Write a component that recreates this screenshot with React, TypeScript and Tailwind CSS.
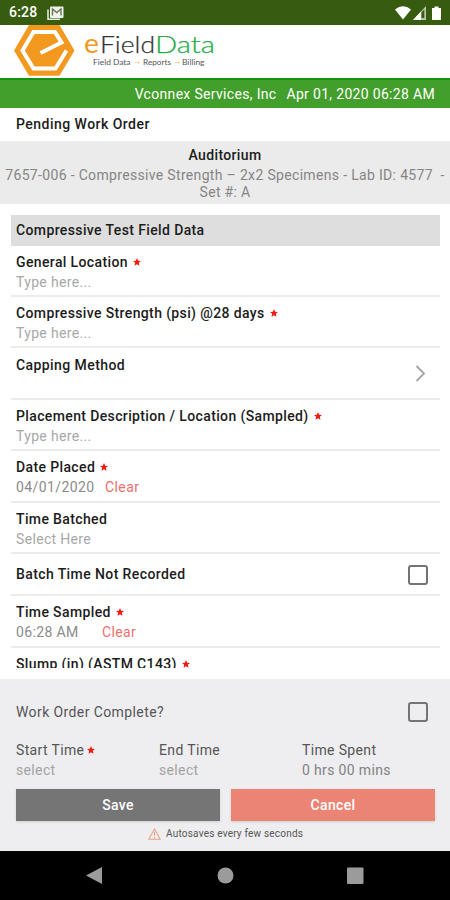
import type { ReactNode } from "react";

const Star = ({ className = "ml-[5px]" }: { className?: string }) => (
  <svg className={`inline-block size-[8px] align-[1.5px] ${className}`} viewBox="0 0 24 24" fill="#f5190f">
    <path d="M12 0l3.4 8 8.6.8-6.500 5.700 2 8.500L12 18.500 4.500 23l2-8.500L0 8.800 8.600 8z" />
  </svg>
);

function Field({
  label,
  required,
  height = "h-[51px]",
  children,
}: {
  label: string;
  required?: boolean;
  height?: string;
  children?: ReactNode;
}) {
  return (
    <div className={`${height} shrink-0 border-b-2 border-[#ebebeb] pl-[5px] pt-[6px] text-[14px] leading-[20px]`}>
      <div className="whitespace-nowrap font-medium tracking-[0.37px] text-[#1c1c1c]">
        {label}
        {required && <Star />}
      </div>
      {children}
    </div>
  );
}

const Hint = ({ children }: { children: ReactNode }) => (
  <div className="tracking-[0.33px] text-[#a8a8a8]">{children}</div>
);

const Checkbox = () => <div className="size-[20px] rounded-[3px] border-2 border-[#747474]" />;

function StatusBar() {
  return (
    <div className="flex h-[25px] shrink-0 items-center bg-[#375c0f] pl-[9px] pr-[7px] text-white">
      <span className="text-[14px] font-medium leading-[25px] tracking-[0.2px]">6:28</span>
      <svg className="ml-[10px] mt-px" width="17" height="15" viewBox="0 0 17 15">
        <path d="M1 3.500V13.200H13" fill="none" stroke="#e3e8dc" strokeWidth="1.600" />
        <rect x="3" y="0.500" width="13.500" height="11.500" rx="1" fill="#f1f4ec" />
        <path d="M5.500 9.500V3l4.250 3.600L14 3v6.500" fill="none" stroke="#66774f" strokeWidth="1.400" />
      </svg>
      <svg className="ml-auto" width="48" height="16" viewBox="0 0 48 16">
        <path d="M0 4.500Q8-2 16 4.500L8 14.500z" fill="#fff" />
        <path d="M31 1V15H18z" fill="#b9c5ad" />
        <path d="M26 6.500V15H18z" fill="#fff" />
        <path d="M26.500 7.500 29.300 4.500V13H26.500z" fill="#375c0f" />
        <path d="M39.500 1.500h4V3H46v12h-9V3h2.500z" fill="#fff" />
      </svg>
    </div>
  );
}

function Logo() {
  return (
    <div className="h-[53px] shrink-0 bg-white">
      <svg width="225" height="53" viewBox="0 25 225 53">
        <path d="M29 25H59.500L74.500 50.500 59.500 75.700H29L14 50.500z" fill="#f3991f" />
        <path
          d="M40.500 53 61.500 42.500 55 32H33.500L22.500 50.500 33.500 68.500H55.500L66.500 50.500"
          fill="none"
          stroke="#fff"
          strokeWidth="4"
        />
        <g fontFamily="Lato, 'Open Sans', sans-serif" fontSize="23.500" strokeWidth="0.250">
          <text x="84" y="53" fontSize="26" textLength="15" lengthAdjust="spacingAndGlyphs" fill="#f3991f">e</text>
          <text x="100" y="53" textLength="55" lengthAdjust="spacingAndGlyphs" fill="#333" stroke="#333" fontWeight="300">Field</text>
          <text x="155" y="53" textLength="60" lengthAdjust="spacingAndGlyphs" fill="#27ab4b" stroke="#27ab4b" fontWeight="300">Data</text>
        </g>
        <g fontFamily="Lato, 'Open Sans', sans-serif" fontSize="8" fill="#555">
          <text x="93" y="65" textLength="37.500" lengthAdjust="spacingAndGlyphs">Field Data</text>
          <text x="143" y="65" textLength="28" lengthAdjust="spacingAndGlyphs">Reports</text>
          <text x="182" y="65" textLength="22.500" lengthAdjust="spacingAndGlyphs">Billing</text>
        </g>
        <path d="M134.500 62.500h5M138 61l1.500 1.500L138 64M174.500 62.500h5M178 61l1.500 1.500L178 64" stroke="#f8dcae" fill="none" />
      </svg>
    </div>
  );
}

export default function App() {
  return (
    <div className="flex h-[900px] w-[450px] flex-col overflow-hidden bg-white font-[Roboto,sans-serif]">
      <StatusBar />
      <Logo />
      <div className="flex h-[30px] shrink-0 justify-end gap-[10px] border-t-2 border-[#169210] bg-[#439f2b] pr-[15px] text-[14px] leading-[28px] tracking-[0.32px] text-white">
        <span>Vconnex Services, Inc</span>
        <span>Apr 01, 2020 06:28 AM</span>
      </div>
      <div className="h-[33px] shrink-0 pl-[16px] text-[14px] font-medium leading-[33px] tracking-[0.47px] text-[#1c1c1c]">
        Pending Work Order
      </div>
      <div className="h-[63px] shrink-0 bg-[#ebebeb] pt-[6px] text-center text-[14px] leading-[17.500px] text-[#858585]">
        <div className="font-medium tracking-[0.35px] text-[#1c1c1c]">Auditorium</div>
        <div className="whitespace-pre pt-[2px] tracking-[0.33px]">7657-006 - Compressive Strength – 2x2 Specimens - Lab ID: 4577  -</div>
        <div className="tracking-[0.3px]">Set #: A</div>
      </div>
      <div className="ml-[11px] mr-[10px] mt-[11px] h-[31px] shrink-0 bg-[#dedede] pl-[5px] text-[14px] font-medium leading-[31px] tracking-[0.38px] text-[#1c1c1c]">
        Compressive Test Field Data
      </div>
      <div className="mr-[10px] ml-[11px] flex h-[422px] shrink-0 flex-col overflow-hidden">
        <Field label="General Location" required>
          <Hint>Type here...</Hint>
        </Field>
        <Field label="Compressive Strength (psi) @28 days" required>
          <Hint>Type here...</Hint>
        </Field>
        <div className="flex h-[52px] shrink-0 justify-between border-b-2 border-[#ebebeb] pl-[5px] pr-[14px] text-[14px] font-medium leading-[20px] tracking-[0.42px] text-[#1c1c1c]">
          <span className="pt-[7px]">Capping Method</span>
          <svg className="mt-[17px]" width="11" height="17" viewBox="0 0 11 17" fill="none" stroke="#a3a3a3" strokeWidth="1.800">
            <path d="M1.500 1 9 8.500 1.500 16" />
          </svg>
        </div>
        <Field label="Placement Description / Location (Sampled)" required>
          <Hint>Type here...</Hint>
        </Field>
        <Field label="Date Placed" required height="h-[52px]">
          <div className="flex tracking-[0.4px] text-[#8b8b8b]">
            <span className="w-[89px]">04/01/2020</span>
            <span className="text-[#ef6e6e]">Clear</span>
          </div>
        </Field>
        <Field label="Time Batched">
          <Hint>Select Here</Hint>
        </Field>
        <div className="flex h-[42px] shrink-0 items-center justify-between border-b-2 border-[#ebebeb] pl-[5px] pr-[12px] pt-px text-[14px] font-medium tracking-[0.4px] text-[#1c1c1c]">
          <span>Batch Time Not Recorded</span>
          <Checkbox />
        </div>
        <Field label="Time Sampled" required height="h-[52px]">
          <div className="flex tracking-[0.35px] text-[#8b8b8b]">
            <span className="w-[86px]">06:28 AM</span>
            <span className="text-[#ef6e6e]">Clear</span>
          </div>
        </Field>
        <Field label="Slump (in) (ASTM C143)" required />
      </div>
      <div className="mt-[11px] flex h-[172px] shrink-0 flex-col bg-[#eeeef0] pl-[16px] pr-[15px] text-[14px] leading-[20px] tracking-[0.35px] text-[#555]">
        <div className="mt-[22px] flex h-[21px] items-center justify-between pr-[7px]">
          <span className="tracking-[0.4px]">Work Order Complete?</span>
          <Checkbox />
        </div>
        <div className="mt-[18px] grid h-[40px] grid-cols-[143px_143px_1fr] whitespace-nowrap">
          <div>
            <div>Start Time<Star className="ml-[3px]" /></div>
            <div className="text-[#a3a3a3]">select</div>
          </div>
          <div>
            <div>End Time</div>
            <div className="text-[#a3a3a3]">select</div>
          </div>
          <div>
            <div>Time Spent</div>
            <div className="text-[#828282]">0 hrs 00 mins</div>
          </div>
        </div>
        <div className="mt-[9px] grid h-[31px] shrink-0 grid-cols-2 gap-[11px] text-center font-medium leading-[32px] text-white">
          <div className="bg-[#757575] shadow-sm">Save</div>
          <div className="bg-[#eb8474] shadow-sm">Cancel</div>
        </div>
        <div className="mt-[5px] flex items-center pl-[132px] text-[10px] leading-[18px] tracking-[0.21px] text-[#555]">
          <svg className="mr-[5px]" width="13" height="12" viewBox="0 0 13 12" fill="none" stroke="#e9a383" strokeWidth="1.100">
            <path d="M6.500 1 12.300 11.300H.7zM6.500 4v4M6.500 9v1.200" />
          </svg>
          Autosaves every few seconds
        </div>
      </div>
      <div className="flex grow items-center bg-black pl-[86px]">
        <svg width="280" height="20" viewBox="0 0 280 20" fill="#9b9b9b">
          <path d="M0 9.500 16 1V18z" />
          <circle cx="139.500" cy="9.500" r="8" />
          <rect x="261" y="1.500" width="16.500" height="16.500" rx="1" />
        </svg>
      </div>
    </div>
  );
}
